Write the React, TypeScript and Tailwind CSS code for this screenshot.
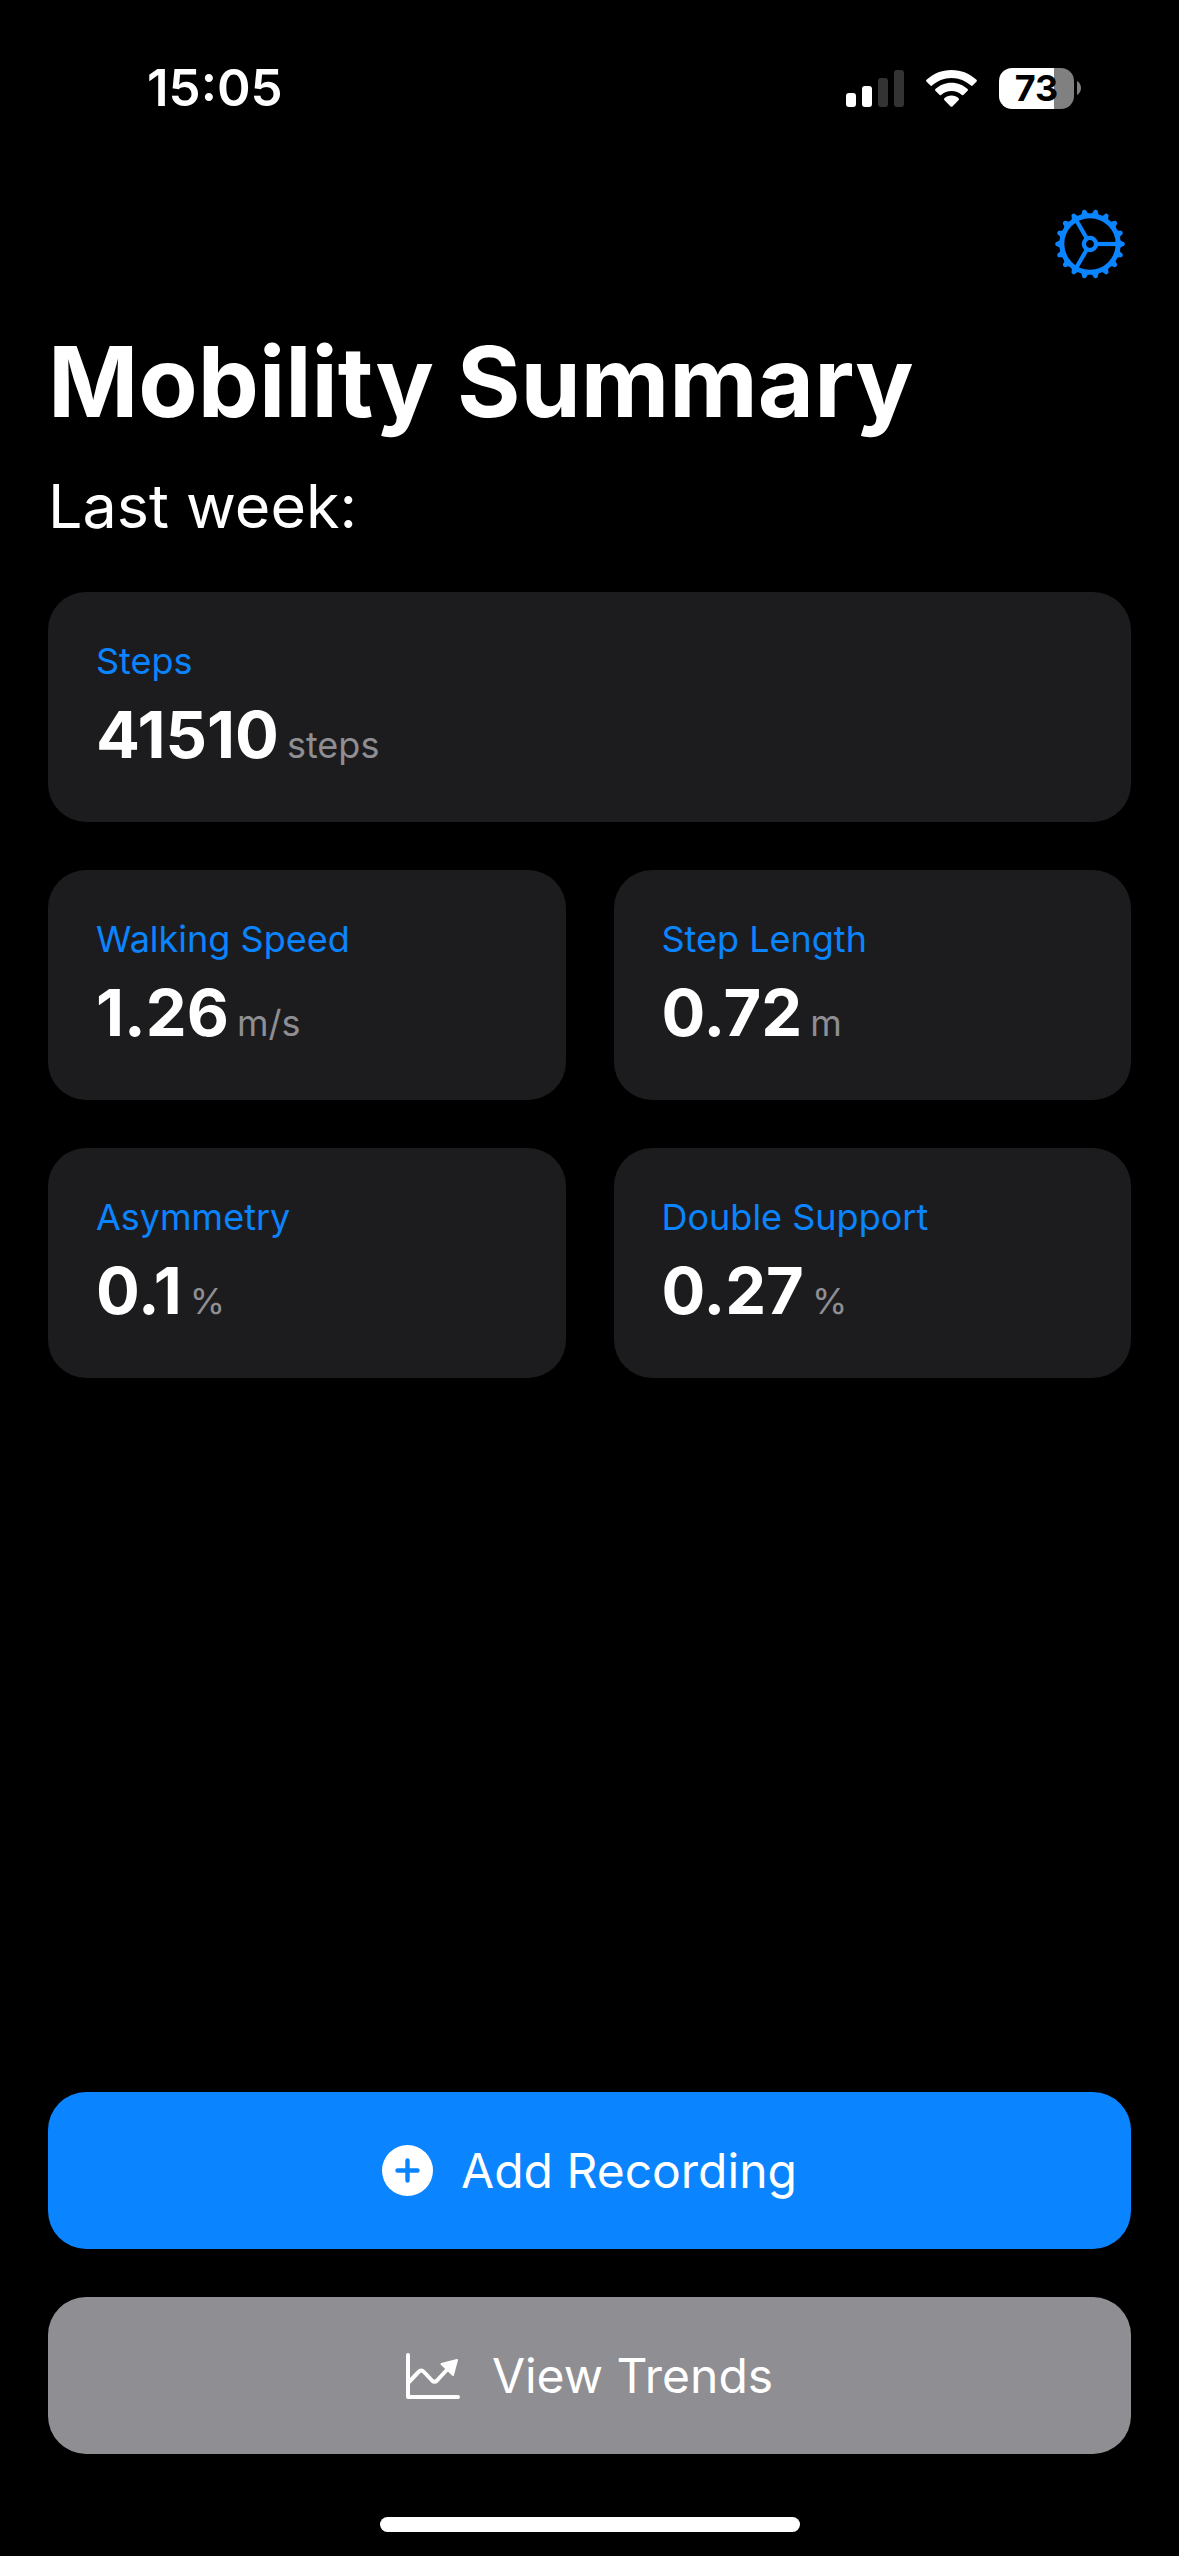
type Metric = { label: string; value: string; unit: string; wide?: boolean };

const metrics: Metric[] = [
  { label: 'Steps', value: '41510', unit: 'steps', wide: true },
  { label: 'Walking Speed', value: '1.26', unit: 'm/s' },
  { label: 'Step Length', value: '0.72', unit: 'm' },
  { label: 'Asymmetry', value: '0.1', unit: '%' },
  { label: 'Double Support', value: '0.27', unit: '%' },
];

const teeth = Array.from({ length: 18 }, (_, i) => i * 20);

function SignalIcon() {
  return (
    <svg className="h-[37px] w-[58px]" viewBox="0 0 58 37" fill="#fff" aria-hidden="true">
      <rect x="0" y="23" width="10" height="14" rx="3" />
      <rect x="16" y="16" width="10" height="21" rx="3" />
      <rect x="32" y="8" width="10" height="29" rx="3" fill="#333" />
      <rect x="48" y="0" width="10" height="37" rx="3" fill="#333" />
    </svg>
  );
}

function WifiIcon() {
  return (
    <svg className="h-[37px] w-[51px]" viewBox="0 0 51 37" fill="#fff" aria-hidden="true">
      <path d="M25.5 0C35.2 0 44 3.7 50.5 9.8c.5.5.5 1.2.1 1.7l-4 4.1c-.5.4-1.1.4-1.6 0C39.9 10.8 33.1 7.9 25.5 7.9S11.1 10.8 6 15.6c-.5.4-1.1.4-1.6 0l-4-4.1c-.4-.5-.4-1.2.1-1.7C7 3.7 15.8 0 25.5 0Z" />
      <path d="M25.5 12.8c6.2 0 11.9 2.4 16.1 6.3.5.5.5 1.2 0 1.7l-4 4c-.5.5-1.2.5-1.7.1-2.8-2.5-6.4-4-10.4-4s-7.6 1.5-10.4 4c-.5.4-1.2.4-1.7-.1l-4-4c-.5-.5-.5-1.2 0-1.7 4.2-3.9 9.9-6.3 16.1-6.3Z" />
      <path d="M25.5 25.6c2.7 0 5.2 1 7.1 2.6.5.5.5 1.2.1 1.7l-6.3 6.5c-.5.5-1.3.5-1.8 0l-6.3-6.5c-.4-.5-.4-1.2.1-1.7 1.9-1.6 4.4-2.6 7.1-2.6Z" />
    </svg>
  );
}

function Battery() {
  return (
    <div className="flex items-center gap-[3px]" role="img" aria-label="Battery 73 percent">
      <div className="flex h-[41px] w-[75px] items-center justify-center rounded-[13px] bg-[linear-gradient(to_right,#fff_55px,#808080_55px)] text-[36px] leading-none font-bold text-black">
        73
      </div>
      <svg className="h-[14px] w-[4px]" viewBox="0 0 4 14" fill="#808080" aria-hidden="true">
        <path d="M0 0C2.5 1.5 4 4 4 7S2.5 12.5 0 14Z" />
      </svg>
    </div>
  );
}

function GearIcon() {
  return (
    <svg className="size-[70px]" viewBox="-35 -35 70 70" fill="none" stroke="#0a84ff" aria-hidden="true">
      <circle r="28.2" strokeWidth="5" />
      <circle r="6.1" strokeWidth="4.3" />
      {[0, 120, 240].map((angle) => (
        <path key={angle} d="M7.5 0H28" strokeWidth="4.2" transform={`rotate(${angle})`} />
      ))}
      {teeth.map((angle) => (
        <path
          key={angle}
          d="M29 -5C30.5 -3 32 -2.5 33.6 -2C35.1 -1.5 35.1 1.5 33.6 2C32 2.5 30.5 3 29 5Z"
          fill="#0a84ff"
          stroke="none"
          transform={`rotate(${angle})`}
        />
      ))}
    </svg>
  );
}

function PlusIcon() {
  return (
    <svg className="size-[51px]" viewBox="0 0 51 51" aria-hidden="true">
      <circle cx="25.5" cy="25.5" r="25.5" fill="#fff" />
      <path d="M25.5 15.5v20M15.5 25.5h20" stroke="#0a84ff" strokeWidth="4.4" strokeLinecap="round" />
    </svg>
  );
}

function TrendIcon() {
  return (
    <svg className="h-[46px] w-[54px]" viewBox="0 0 54 46" fill="none" stroke="#fff" strokeWidth="4" strokeLinecap="round" strokeLinejoin="round" aria-hidden="true">
      <path d="M2 2V44H52" />
      <path d="M2.5 29.5L12.5 19Q15.2 15.8 18 19L26 27.5Q28.5 30 31 27.5L43 14.5" />
      <path d="M35.5 11L51 7L47 22Z" fill="#fff" strokeWidth="2" />
    </svg>
  );
}

function MetricCard({ label, value, unit, wide }: Metric) {
  return (
    <section className={`${wide ? 'col-span-2' : ''} flex flex-col gap-3.5 rounded-[38px] bg-[#1c1c1e] p-12`}>
      <h2 className="text-[36px] leading-[42px] text-[#0a84ff]">{label}</h2>
      <p className="flex items-baseline gap-2 text-[65px] leading-[78px] font-bold">
        {value}
        <span className="text-[36px] leading-[42px] font-normal text-[#8e8e93]">{unit}</span>
      </p>
    </section>
  );
}

export default function App() {
  return (
    <div className="flex min-h-screen flex-col bg-black font-['Inter',sans-serif] text-white">
      <header className="flex items-center justify-between pt-14 pr-[98px] pl-[147px]">
        <time className="text-[51px] leading-[64px] font-semibold">15:05</time>
        <div className="flex items-center gap-[22px]">
          <SignalIcon />
          <WifiIcon />
          <Battery />
        </div>
      </header>

      <main className="flex flex-1 flex-col px-12 pt-[89px]">
        <button type="button" aria-label="Settings" className="mr-1.5 self-end">
          <GearIcon />
        </button>
        <h1 className="mt-[41px] text-[97px] leading-[124px] font-bold">Mobility Summary</h1>
        <p className="mt-6 text-[61px] leading-[76px]">Last week:</p>
        <div className="mt-12 grid grid-cols-2 gap-12">
          {metrics.map((metric) => (
            <MetricCard key={metric.label} {...metric} />
          ))}
        </div>
        <div className="mt-auto flex flex-col gap-12 pt-12 text-[48px] leading-[61px]">
          <button type="button" className="flex items-center justify-center gap-7 rounded-[38px] bg-[#0a84ff] py-12">
            <PlusIcon />
            Add Recording
          </button>
          <button type="button" className="flex items-center justify-center gap-8 rounded-[38px] bg-[#8e8e93] py-12">
            <TrendIcon />
            View Trends
          </button>
        </div>
      </main>

      <footer className="flex justify-center pt-[63px] pb-6">
        <div className="h-[15px] w-[420px] rounded-full bg-white" />
      </footer>
    </div>
  );
}
